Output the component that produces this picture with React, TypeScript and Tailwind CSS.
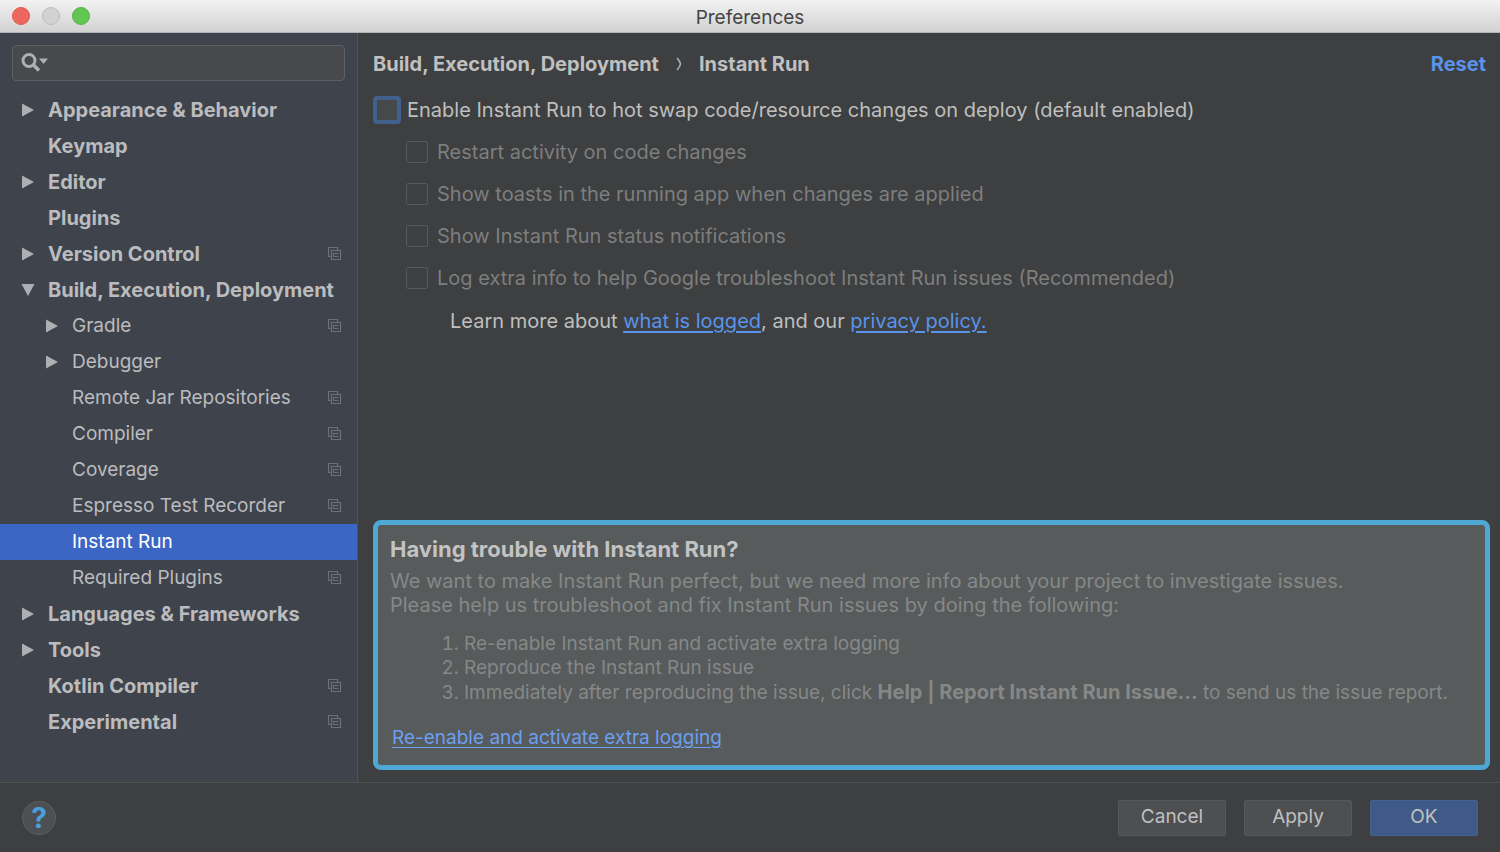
import { useState } from "react";

type TreeItem = {
  label: string;
  level: 0 | 1;
  arrow?: "right" | "down";
  project?: boolean;
};

const tree: TreeItem[] = [
  { label: "Appearance & Behavior", level: 0, arrow: "right" },
  { label: "Keymap", level: 0 },
  { label: "Editor", level: 0, arrow: "right" },
  { label: "Plugins", level: 0 },
  { label: "Version Control", level: 0, arrow: "right", project: true },
  { label: "Build, Execution, Deployment", level: 0, arrow: "down" },
  { label: "Gradle", level: 1, arrow: "right", project: true },
  { label: "Debugger", level: 1, arrow: "right" },
  { label: "Remote Jar Repositories", level: 1, project: true },
  { label: "Compiler", level: 1, project: true },
  { label: "Coverage", level: 1, project: true },
  { label: "Espresso Test Recorder", level: 1, project: true },
  { label: "Instant Run", level: 1 },
  { label: "Required Plugins", level: 1, project: true },
  { label: "Languages & Frameworks", level: 0, arrow: "right" },
  { label: "Tools", level: 0, arrow: "right" },
  { label: "Kotlin Compiler", level: 0, project: true },
  { label: "Experimental", level: 0, project: true },
];

const options = [
  "Restart activity on code changes",
  "Show toasts in the running app when changes are applied",
  "Show Instant Run status notifications",
  "Log extra info to help Google troubleshoot Instant Run issues (Recommended)",
];

function Arrow({ dir }: { dir?: "right" | "down" }) {
  return (
    <svg viewBox="0 0 14 14" className="size-3.5 shrink-0 fill-[#adafb2]" aria-hidden="true">
      {dir === "right" && <path d="M1 0.5v13l12-6.5z" />}
      {dir === "down" && <path d="M0.5 1h13L7 13z" />}
    </svg>
  );
}

function ProjectIcon() {
  return (
    <svg viewBox="0 0 14 14" className="size-3.5 shrink-0" fill="none" stroke="#6c7076" aria-hidden="true">
      <path d="M3.5 9.5h-3v-9h9v3" strokeWidth="1.2" />
      <path d="M3.5 3.5h9v9h-9z" strokeWidth="1.2" />
      <path d="M5.5 6.5h5M5.5 9.5h5M5.5 6v4" />
    </svg>
  );
}

function TitleBar() {
  return (
    <header className="grid h-[33px] shrink-0 grid-cols-[1fr_auto_1fr] items-center border-b border-[#b4b4b4] bg-linear-to-b from-[#f2f2f2] to-[#d2d2d2] px-3">
      <div className="flex gap-3">
        <button type="button" aria-label="Close" className="size-[18px] rounded-full border border-[#e0574f] bg-[#ee675e]" />
        <button type="button" aria-label="Minimize" className="size-[18px] rounded-full border border-[#bdbdbd] bg-[#d2d2d2]" />
        <button type="button" aria-label="Zoom" className="size-[18px] rounded-full border border-[#52b445] bg-[#61c654]" />
      </div>
      <h1 className="pt-1 text-[19px] leading-6 text-[#444]">Preferences</h1>
    </header>
  );
}

function Sidebar() {
  const [selected, setSelected] = useState("Instant Run");

  return (
    <aside className="flex w-[358px] shrink-0 flex-col border-r border-[#505356] bg-[#3f434c]">
      <div className="mx-3 mt-3 flex h-9 items-center rounded border border-[#5c6063] bg-[#47494a] px-2">
        <svg viewBox="0 0 28 20" className="h-5 w-7 shrink-0" aria-hidden="true">
          <circle cx="8" cy="7.5" r="6" fill="none" stroke="#adafb1" strokeWidth="3" />
          <path d="M12 11.5l6 6" stroke="#adafb1" strokeWidth="3.5" />
          <path d="M18 5.5h9l-4.5 5.5z" fill="#adafb1" />
        </svg>
        <input type="text" aria-label="Search" className="min-w-0 flex-1 bg-transparent px-1 text-[#bbb] outline-none" />
      </div>
      <nav className="mt-[11px]">
        <ul>
          {tree.map((item) => (
            <li key={item.label}>
              <button
                type="button"
                onClick={() => setSelected(item.label)}
                className={`flex h-9 w-full items-center gap-[13px] pr-[15px] text-left whitespace-nowrap ${
                  item.level ? "pl-[45px] text-[19px]" : "pl-[21px] font-bold"
                } ${selected === item.label ? "bg-[#3c66c4] text-white" : "text-[#bbbcbe]"}`}
              >
                <Arrow dir={item.arrow} />
                <span className="flex-1">{item.label}</span>
                {item.project && <ProjectIcon />}
              </button>
            </li>
          ))}
        </ul>
      </nav>
    </aside>
  );
}

function TroublePanel() {
  return (
    <section className="mt-auto rounded-lg border-[5px] border-[#4fa7d3] bg-[#575b5b] px-3 pt-3 pb-[15px] leading-6 text-[#868888]">
      <h2 className="text-[22px] leading-6 font-bold text-[#c3c3c3]">Having trouble with Instant Run?</h2>
      <p className="mt-2">
        We want to make Instant Run perfect, but we need more info about your project to investigate issues.
        <br />
        Please help us troubleshoot and fix Instant Run issues by doing the following:
      </p>
      <ol className="mt-[15px] list-decimal pl-[74px] text-[19px]">
        <li>Re-enable Instant Run and activate extra logging</li>
        <li>Reproduce the Instant Run issue</li>
        <li>
          Immediately after reproducing the issue, click{" "}
          <b className="text-[20px]">Help | Report Instant Run Issue...</b> to send us the issue report.
        </li>
      </ol>
      <a href="#reenable" className="mt-[21px] ml-0.5 inline-block text-[19px] text-[#6c9ff0] underline underline-offset-3">
        Re-enable and activate extra logging
      </a>
    </section>
  );
}

function Content() {
  const [enabled, setEnabled] = useState(false);

  return (
    <main className="flex min-w-0 flex-1 flex-col bg-[#3d3f40] pt-[19px] pr-2.5 pb-3 pl-[15px]">
      <div className="flex items-center justify-between pr-1 leading-6 font-bold text-[#c0c0c0]">
        <div className="flex items-center">
          <span>Build, Execution, Deployment</span>
          <svg viewBox="0 0 6 14" className="mx-[17px] h-3.5 w-1.5" fill="none" stroke="#b5b5b5" strokeWidth="1.5" aria-hidden="true">
            <path d="M1 1q3 3 3.5 6q-.5 3-3.5 6" />
          </svg>
          <span>Instant Run</span>
        </div>
        <a href="#reset" className="text-[#5a93ea]">
          Reset
        </a>
      </div>

      <label className="mt-5 flex h-7 items-center gap-1.5 text-[#bfbfbf]">
        <input
          type="checkbox"
          checked={enabled}
          onChange={(e) => setEnabled(e.target.checked)}
          className="size-7 appearance-none rounded border-4 border-[#41618c] bg-[#464949] checked:bg-[#6c9ff0]"
        />
        Enable Instant Run to hot swap code/resource changes on deploy (default enabled)
      </label>
      <div className="mt-[7px] flex flex-col pl-[33px]">
        {options.map((option) => (
          <label key={option} className="flex h-[42px] items-center gap-[9px] text-[#7d7e7e]">
            <input
              type="checkbox"
              disabled={!enabled}
              className="size-[22px] appearance-none rounded-xs border border-[#56595a] checked:bg-[#6c9ff0]"
            />
            {option}
          </label>
        ))}
      </div>
      <p className="mt-2.5 pl-[77px] leading-6 text-[#bfbfbf]">
        Learn more about{" "}
        <a href="#logged" className="text-[#5a93ea] underline underline-offset-3">
          what is logged
        </a>
        , and our{" "}
        <a href="#privacy" className="text-[#5a93ea] underline underline-offset-3">
          privacy policy.
        </a>
      </p>
      <TroublePanel />
    </main>
  );
}

function Footer() {
  return (
    <footer className="flex h-[70px] shrink-0 items-center justify-between border-t border-[#505354] bg-[#3d3f40] px-[22px]">
      <button
        type="button"
        aria-label="Help"
        className="size-[34px] rounded-full border border-[#5c5f60] bg-[#4c5052] text-[28px] leading-8 font-bold text-[#4a9fdc]"
      >
        ?
      </button>
      <div className="flex gap-[18px] text-[19px] text-[#c0c0c0]">
        <button type="button" className="h-9 w-[108px] rounded-xs border border-[#565859] bg-[#4d4f51]">
          Cancel
        </button>
        <button type="button" className="h-9 w-[108px] rounded-xs border border-[#565859] bg-[#4d4f51]">
          Apply
        </button>
        <button type="button" className="h-9 w-[108px] rounded-xs border border-[#45628d] bg-[#3f5a86]">
          OK
        </button>
      </div>
    </footer>
  );
}

export default function App() {
  return (
    <div className="flex min-h-screen flex-col bg-[#3d3f40] font-['Inter','Liberation_Sans',sans-serif] text-[20px]">
      <TitleBar />
      <div className="flex flex-1">
        <Sidebar />
        <Content />
      </div>
      <Footer />
    </div>
  );
}
